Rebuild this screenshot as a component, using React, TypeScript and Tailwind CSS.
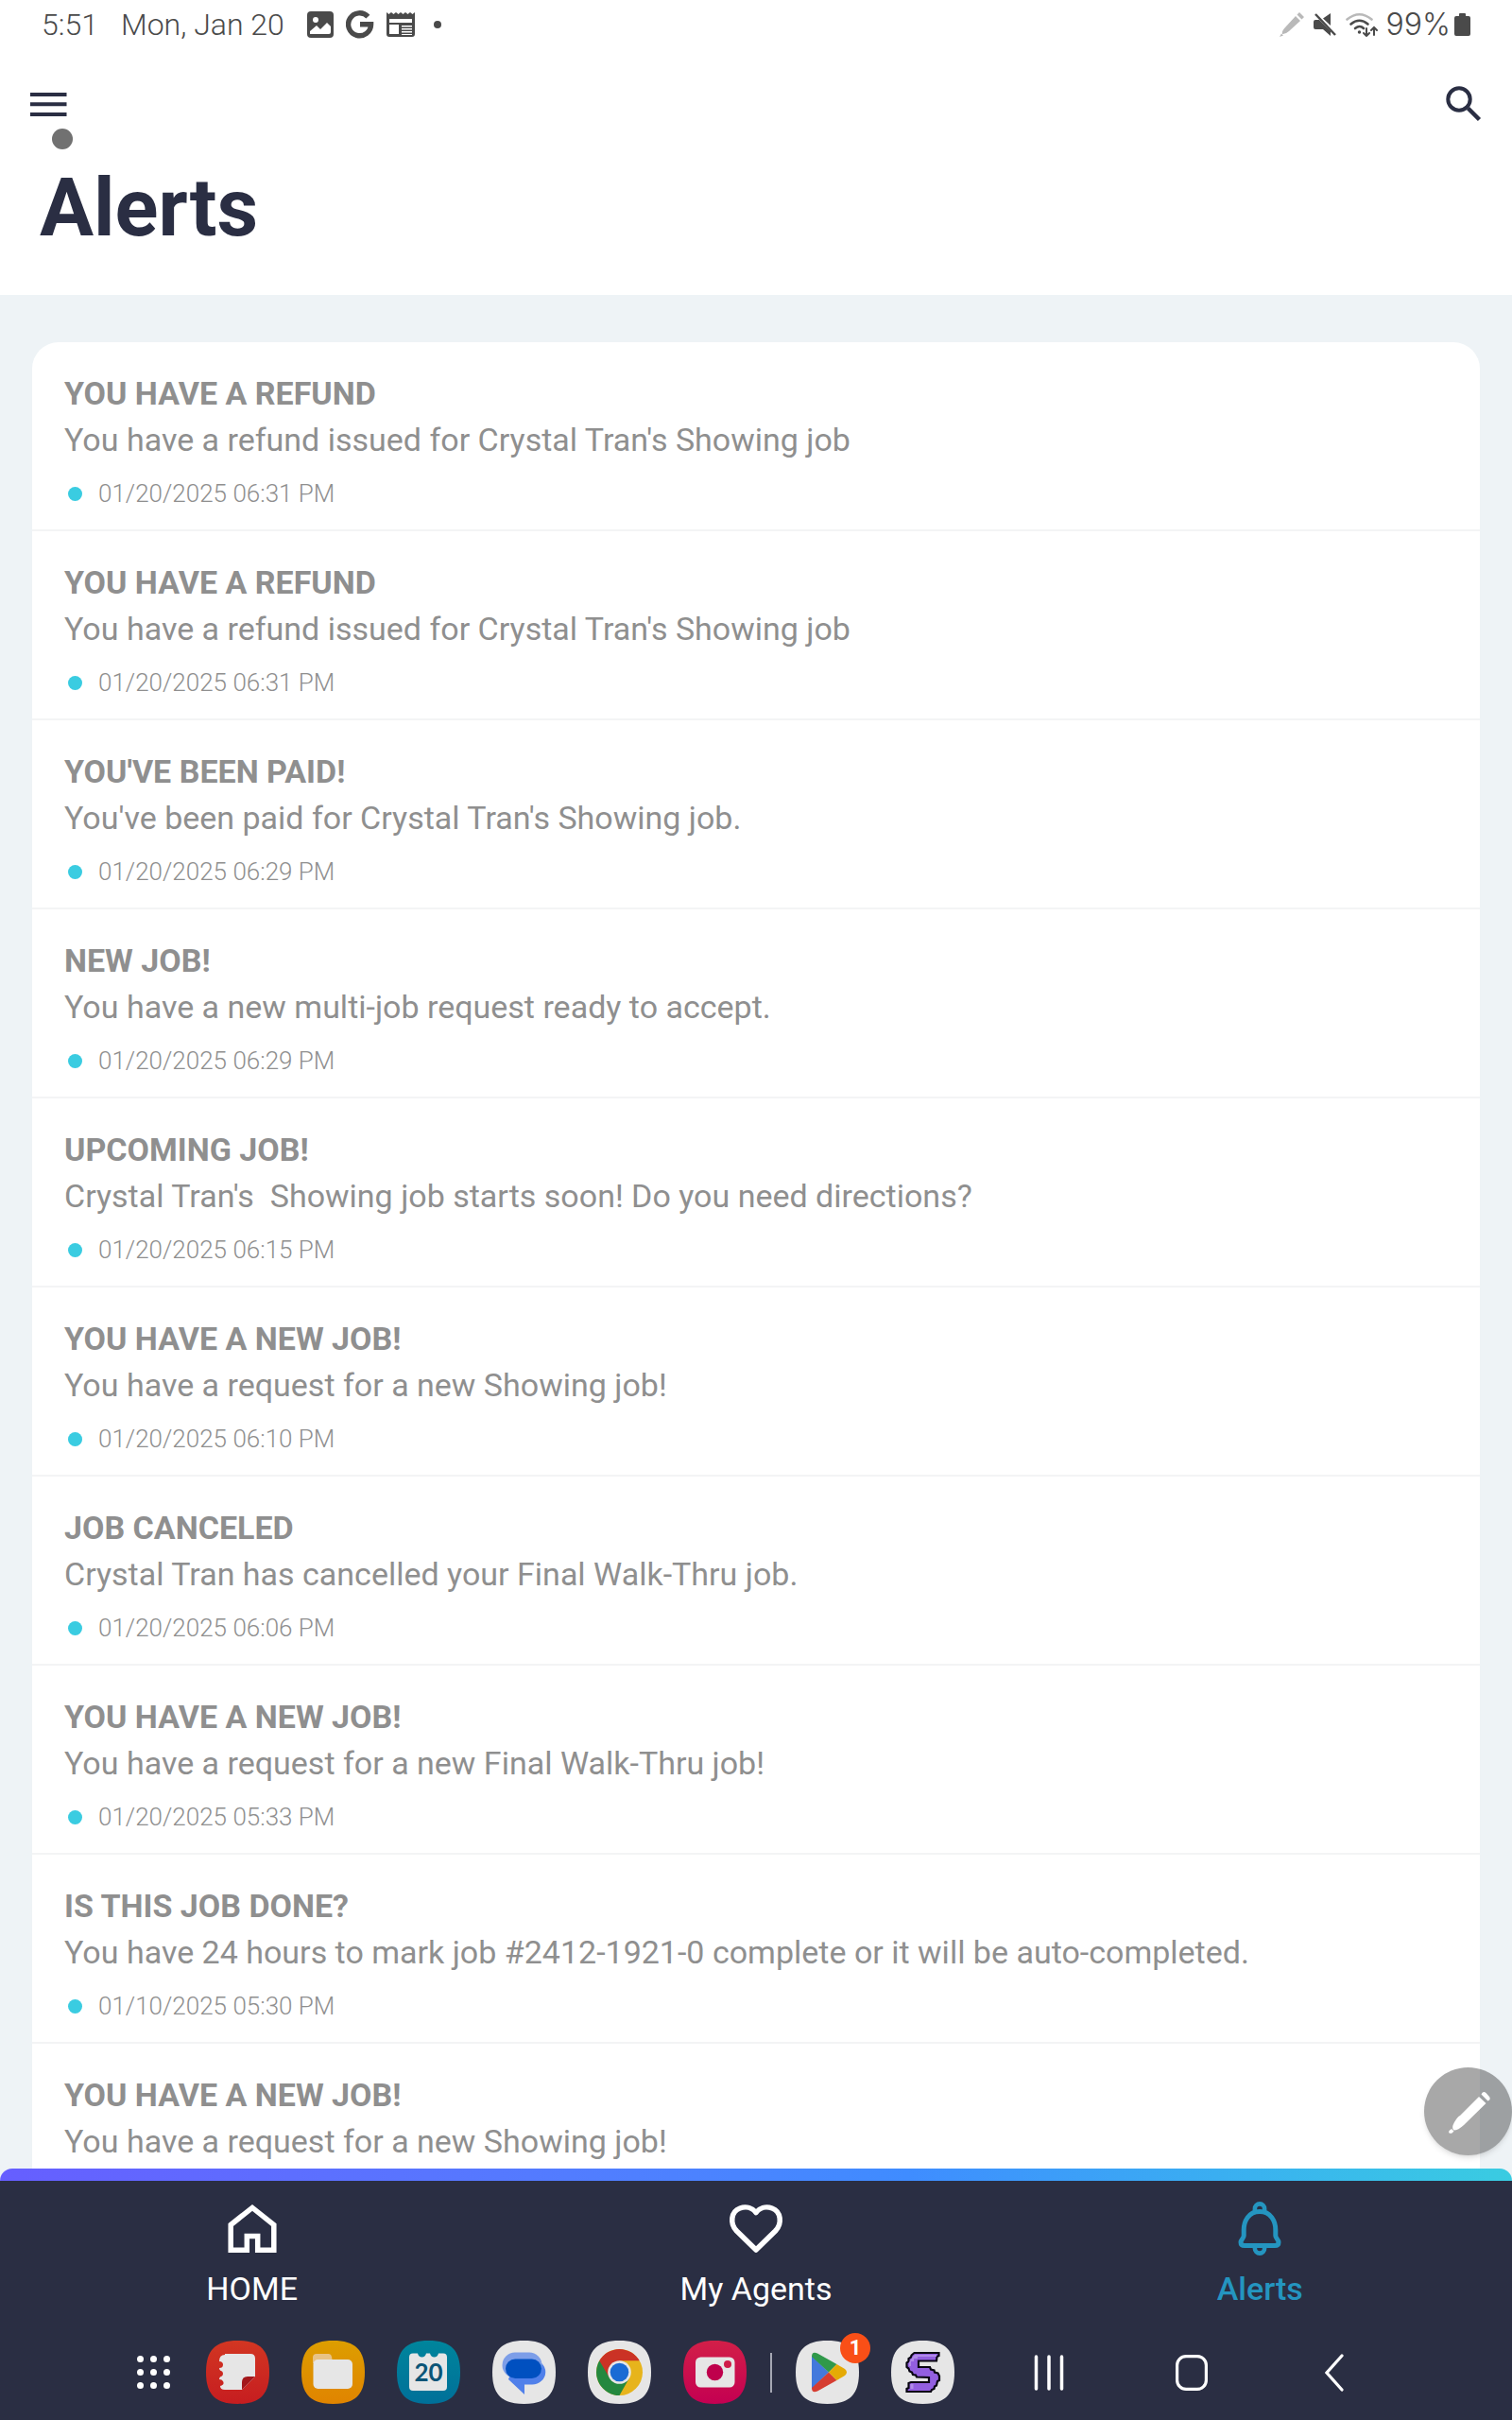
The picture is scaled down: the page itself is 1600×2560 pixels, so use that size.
import React from 'react';

interface AlertItem {
  id: number;
  title: string;
  message: string;
  date?: string;
}

const ALERTS: AlertItem[] = [
  { id: 1, title: 'YOU HAVE A REFUND', message: "You have a refund issued for Crystal Tran's Showing job", date: '01/20/2025 06:31 PM' },
  { id: 2, title: 'YOU HAVE A REFUND', message: "You have a refund issued for Crystal Tran's Showing job", date: '01/20/2025 06:31 PM' },
  { id: 3, title: "YOU'VE BEEN PAID!", message: "You've been paid for Crystal Tran's Showing job.", date: '01/20/2025 06:29 PM' },
  { id: 4, title: 'NEW JOB!', message: 'You have a new multi-job request ready to accept.', date: '01/20/2025 06:29 PM' },
  { id: 5, title: 'UPCOMING JOB!', message: "Crystal Tran's  Showing job starts soon! Do you need directions?", date: '01/20/2025 06:15 PM' },
  { id: 6, title: 'YOU HAVE A NEW JOB!', message: 'You have a request for a new Showing job!', date: '01/20/2025 06:10 PM' },
  { id: 7, title: 'JOB CANCELED', message: 'Crystal Tran has cancelled your Final Walk-Thru job.', date: '01/20/2025 06:06 PM' },
  { id: 8, title: 'YOU HAVE A NEW JOB!', message: 'You have a request for a new Final Walk-Thru job!', date: '01/20/2025 05:33 PM' },
  { id: 9, title: 'IS THIS JOB DONE?', message: 'You have 24 hours to mark job #2412-1921-0 complete or it will be auto-completed.', date: '01/10/2025 05:30 PM' },
  { id: 10, title: 'YOU HAVE A NEW JOB!', message: 'You have a request for a new Showing job!' },
];

/* ---------- status bar ---------- */

const StatusBar = () => (
  <div className="flex h-[52px] shrink-0 items-center justify-between pl-11 pr-11 text-[32px] leading-none text-[#4a4a4a]">
    <div className="flex items-center font-[350]">
      <span>5:51</span>
      <span className="ml-6">Mon, Jan 20</span>
      <svg className="ml-6 size-7" viewBox="0 0 28 28" aria-hidden="true">
        <rect width="28" height="28" rx="4" fill="currentColor" />
        <circle cx="9" cy="9" r="3" fill="#fff" />
        <path d="M3 24v-3l7-6 4 4 7-7 4 4v6q0 2-2 2z" fill="#fff" />
      </svg>
      <svg className="ml-[13px] size-[30px]" viewBox="0 0 30 30" fill="none" stroke="currentColor" strokeWidth="5.4" aria-hidden="true">
        <path d="M23.4 6.6A12 12 0 1 0 26.600 14.800H15" />
      </svg>
      <svg className="ml-[13px] size-[30px]" viewBox="0 0 30 30" aria-hidden="true">
        <path d="M0 2l2.500 2L5 2l2.500 2L10 2l2.500 2L15 2l2.500 2L20 2l2.500 2L25 2l2.500 2L30 2v23q0 3-3 3H3q-3 0-3-3z" fill="currentColor" />
        <path d="M3 9h24v4H3zM3 15h10v10H3zM16 16h11v1.500H16zM16 19h11v1.500H16zM16 22h11v1.500H16zM16 25h11v1H16z" fill="#fff" />
      </svg>
      <span className="ml-5 size-2 rounded-full bg-[#4a4a4a]" />
    </div>
    <div className="flex items-center">
      <svg className="size-[26px] text-[#b9b9b9]" viewBox="0 0 26 26" fill="currentColor" aria-hidden="true">
        <path d="M17 4l5 5L10 20q-4 3.500-7 3-1-3 3-7z" />
        <path d="M18.500 2.500L21 0l5 5-2.500 2.500zM2 22.500l2 2L0 26z" />
      </svg>
      <svg className="ml-[10px] h-[26px] w-6" viewBox="0 0 24 26" fill="currentColor" aria-hidden="true">
        <path d="M18 1v13L10 6.500zM0 10q0-2 2-2h4l12 12v5l-8-7H2q-2 0-2-2z" />
        <path d="M2 2l21 22" stroke="currentColor" strokeWidth="2.500" />
      </svg>
      <svg className="ml-[10px] h-[26px] w-[34px]" viewBox="0 0 34 26" fill="none" stroke="currentColor" strokeWidth="2.600" strokeLinecap="round" aria-hidden="true">
        <path d="M1.500 7.500q13-10.500 26 0" stroke="#b9b9b9" />
        <path d="M5.500 12.500q9-7.500 18 0M10 17q5-4 9 0" />
        <circle cx="14.500" cy="21" r="1" fill="currentColor" strokeWidth="1.500" />
        <path d="M22 17v8m-3-3l3 3 3-3M30 24v-8m-3 3l3-3 3 3" strokeWidth="2" />
      </svg>
      <span className="ml-[9px] font-[Inter,sans-serif] font-[350]">99%</span>
      <svg className="ml-1 h-6 w-[17px]" viewBox="0 0 17 24" fill="currentColor" aria-hidden="true">
        <path d="M5 1q0-1 1-1h5q1 0 1 1v2h3q2 0 2 2v17q0 2-2 2H2q-2 0-2-2V5q0-2 2-2h3z" />
      </svg>
    </div>
  </div>
);

/* ---------- page header ---------- */

const Header = () => (
  <header className="flex h-[260px] shrink-0 flex-col">
    <div className="flex items-center justify-between pl-8 pr-8 pt-9">
      <button type="button" aria-label="Open menu" className="relative text-[#2a2e43]">
        <svg className="h-[46px] w-[39px]" viewBox="0 0 39 46" fill="currentColor">
          <path d="M0 10h38.500v4H0zM0 20.300h38.500v4H0zM0 31h38.500v4H0z" />
        </svg>
        <span className="absolute left-[23px] top-12 size-[22px] rounded-full bg-[#717171]" />
      </button>
      <button type="button" aria-label="Search" className="text-[#2a2e43]">
        <svg className="h-[46px] w-[38px]" viewBox="0 0 38 46" fill="none" stroke="currentColor" strokeWidth="4">
          <circle cx="14" cy="17" r="11.700" />
          <path d="M23.500 26.500l12 12" strokeWidth="4.500" />
        </svg>
      </button>
    </div>
    <h1 className="mt-9 pl-[42px] text-[85px] font-bold leading-[100px] text-[#2a2e43]">Alerts</h1>
  </header>
);

const AlertRow = ({ alert }: { alert: AlertItem }) => (
  <li className="border-b-2 border-[#f3f4f5] px-[34px] pb-[18px] pt-8 text-[#8f8f8f]">
    <h2 className="text-[34px] font-bold leading-[44px]">{alert.title}</h2>
    <p className="mt-1 whitespace-pre text-[34px] leading-[46px]">{alert.message}</p>
    <div className="mt-[14px] flex h-10 items-center gap-[17px] pl-1">
      <span className="size-[15px] rounded-full bg-[#3acce1]" />
      {alert.date && <time className="text-[26px] font-[350] leading-10">{alert.date}</time>}
    </div>
  </li>
);

/* ---------- bottom tabs ---------- */

const HomeIcon = () => (
  <svg className="size-[60px]" viewBox="0 0 60 60" fill="none" stroke="currentColor" strokeWidth="5.500" aria-hidden="true">
    <path d="M7.200 25.500L30 7.400l22.800 18.100v26.700H35.700V37.500H24.300v14.700H7.200z" />
  </svg>
);

const HeartIcon = () => (
  <svg className="size-[60px]" viewBox="0 0 60 60" fill="none" stroke="currentColor" strokeWidth="5.500" strokeLinejoin="round" aria-hidden="true">
    <path d="M30 52L9.500 32C2 24 3.500 11.500 13 8C20 5.500 26.500 8 30 12.500C33.500 8 40 5.500 47 8C56.500 11.500 58 24 50.500 32z" />
  </svg>
);

const BellIcon = () => (
  <svg className="size-[66px]" viewBox="0 0 66 66" fill="none" stroke="currentColor" strokeWidth="5" strokeLinejoin="round" aria-hidden="true">
    <path d="M33 14.500C21 14.500 16.200 25 16.200 34v6c0 3-3.200 4-3.200 7q0 3.500 4 3.500h32q4 0 4-3.500c0-3-3.200-4-3.200-7v-6C49.800 25 45 14.500 33 14.500z" />
    <path d="M27.900 15v-3.500a5.100 5.100 0 0 1 10.200 0V15M27.900 51v2.500a5.100 5.100 0 0 0 10.200 0V51" strokeWidth="4.600" />
  </svg>
);

const TABS = [
  { label: 'HOME', icon: <HomeIcon />, active: false },
  { label: 'My Agents', icon: <HeartIcon />, active: false },
  { label: 'Alerts', icon: <BellIcon />, active: true },
];

const TabBar = () => (
  <nav className="shrink-0 bg-[#2a2e43]" aria-label="Main">
    <div className="bg-[#eef3f6]">
      <div className="h-[13px] rounded-t-[13px] bg-linear-to-r from-[#665eff] via-[#3f8cff] via-60% to-[#3acce1]" />
    </div>
    <div className="grid h-[152px] grid-cols-3">
      {TABS.map((tab) => (
        <a
          key={tab.label}
          href="#"
          aria-current={tab.active ? 'page' : undefined}
          className={`flex flex-col items-center pt-[18px] text-[34px] leading-10 ${tab.active ? 'font-medium text-[#2495c0]' : 'text-white'}`}
        >
          <span className="flex h-[66px] items-center">{tab.icon}</span>
          <span className="mt-[10px]">{tab.label}</span>
        </a>
      ))}
    </div>
  </nav>
);

/* ---------- device task bar ---------- */

const SQUIRCLE = 'M33.500 0C57 0 67 10 67 33.500S57 67 33.500 67S0 57 0 33.500S10 0 33.500 0z';

const AppButton = ({ label, fill, children }: { label: string; fill: string; children: React.ReactNode }) => (
  <button type="button" aria-label={label} className="relative shrink-0">
    <svg className="size-[67px]" viewBox="0 0 67 67">
      <defs>
        <linearGradient id="redApp" x1="0" y1="0" x2="0" y2="1"><stop stopColor="#d23622" /><stop offset="1" stopColor="#c61d20" /></linearGradient>
        <linearGradient id="yellowApp" x1="0" y1="0" x2="0" y2="1"><stop stopColor="#dd9e00" /><stop offset="1" stopColor="#e08400" /></linearGradient>
        <linearGradient id="tealApp" x1="0" y1="0" x2="0" y2="1"><stop stopColor="#00859c" /><stop offset="1" stopColor="#007099" /></linearGradient>
        <linearGradient id="pinkApp" x1="0" y1="0" x2="0" y2="1"><stop stopColor="#d21f48" /><stop offset="1" stopColor="#c40052" /></linearGradient>
      </defs>
      <path d={SQUIRCLE} fill={fill} />
      {children}
    </svg>
  </button>
);

const TaskBar = () => (
  <footer className="flex h-[101px] shrink-0 items-center bg-[#2a2e43] pl-[145px] text-white">
    <button type="button" aria-label="All apps" className="shrink-0">
      <svg className="size-[35px]" viewBox="0 0 35 35" fill="currentColor">
        {[3.5, 17.5, 31.5].map((y) => [3.5, 17.5, 31.5].map((x) => <circle key={`${x}-${y}`} cx={x} cy={y} r="3.500" />))}
      </svg>
    </button>
    <div className="ml-[38px] flex items-center gap-[34px]">
      <AppButton label="Notes" fill="url(#redApp)">
        <path d="M20 14h27q5 0 5 5v19L38 52H20q-5 0-5-4q5-1 3-5q-1-2-4-2q0-3 3-3.500q2-2.500 0-5q-3-1-3-3.500q4 0 4-3.500t-4-3.500q0-7 6-7z" fill="#e6e6e6" />
        <path d="M38 52V44q0-6 6-6h8z" fill="#a3171b" />
      </AppButton>
      <AppButton label="My Files" fill="url(#yellowApp)">
        <path d="M12 24v-6q0-4 4-4h13q3 0 3.500 6z" fill="#e8c285" />
        <rect x="12.500" y="20" width="41.500" height="31" rx="5" fill="#e6e6e6" />
      </AppButton>
      <AppButton label="Calendar" fill="url(#tealApp)">
        <path d="M17 13.500h5q1 4 4.500 4t4.500-4h4q1 4 4.500 4t4.500-4h5q4 0 4 4V49q0 4-4 4H17q-4 0-4-4V17.500q0-4 4-4z" fill="#e6e6e6" />
        <text x="33.500" y="43" textAnchor="middle" fontSize="26" fontWeight="700" fill="#0b5577" fontFamily="Lato, sans-serif">20</text>
      </AppButton>
      <AppButton label="Messages" fill="#e6e6e6">
        <path d="M25 20h17a14 13 0 0 1 0 26.500h-8V57L17 41z" fill="#5080ea" />
        <rect x="10.500" y="12.500" width="42" height="27" rx="13.500" fill="#7d9ee8" />
        <rect x="14" y="19.500" width="38" height="20.500" rx="10.200" fill="#0050c0" />
      </AppButton>
      <AppButton label="Chrome" fill="#e6e6e6">
        <circle cx="33.500" cy="33.500" r="24.500" fill="#e7b41c" />
        <path d="M33.500 33.500L12.300 21.300A24.500 24.500 0 0 0 33.500 58L44 39.500z" fill="#24883f" />
        <path d="M12.300 21.300A24.500 24.500 0 0 1 54.700 21.300H33.500L23 39.500z" fill="#cb3225" />
        <circle cx="33.500" cy="33.500" r="12.300" fill="#e6e6e6" />
        <circle cx="33.500" cy="33.500" r="9.800" fill="#1a6bd4" />
      </AppButton>
      <AppButton label="Camera" fill="url(#pinkApp)">
        <rect x="13" y="17.500" width="41.500" height="32" rx="5.500" fill="#e6e6e6" />
        <circle cx="33.500" cy="33.500" r="8.700" fill="#bf004c" />
        <circle cx="47" cy="25" r="4" fill="#cf1c48" />
      </AppButton>
    </div>
    <span className="mx-[25px] h-[42px] w-[2px] bg-[#a5a7b3]" />
    <div className="flex items-center gap-[34px]">
      <div className="relative flex">
        <AppButton label="Play Store" fill="#e6e6e6">
          <path d="M17 16v35l18-17.500z" fill="#4379dc" />
          <path d="M17 17q0-6 6-3.500L43.500 25L35 33.500z" fill="#30994a" />
          <path d="M17 50q0 6 6 3.500L43.500 42L35 33.500z" fill="#d63d31" />
          <path d="M43.500 25l8.500 5q4 3.500 0 7l-8.500 5L35 33.500z" fill="#e5aa05" />
        </AppButton>
        <span className="absolute -right-3 -top-2 flex size-8 items-center justify-center rounded-full bg-[#f94f17] text-[22px] font-bold leading-none">1</span>
      </div>
      <AppButton label="Shortcuts" fill="#e6e6e6">
        <path
          d="M24.500 13H50.500V16L48.500 17L48 21.500H29V28H41L42 30.500L45.500 31.500L46 33.500L49.500 34.500L51 37.500V42L49 43L48 47.500L46 48.500L45.500 51L43 52L42 54H16.500V51L18.500 50V45L21 44H40V39L27 38.500L26 36.500L23 36L22 33.500L19.500 32.500L18.500 29.500L16.500 28V23.500L18.500 22V19L21 17.500L21.500 15.500z"
          fill="#935fe0"
          stroke="#090612"
          strokeWidth="2.200"
        />
        <path d="M25 15h23v2H28v2h-4v3h-3v5h-2v-4l2-3 2-3zM20.500 46h3v5h-3z" fill="#b18be8" />
      </AppButton>
    </div>
    <div className="ml-6 flex flex-1 items-center">
      <button type="button" aria-label="Recent apps" className="flex w-[151px] justify-center">
        <svg className="h-[38px] w-8" viewBox="0 0 32 38" stroke="currentColor" strokeWidth="3.500" strokeLinecap="round">
          <path d="M2.500 2v34M16 2v34M29.500 2v34" />
        </svg>
      </button>
      <button type="button" aria-label="Home" className="flex w-[151px] justify-center">
        <svg className="h-[38px] w-[34px]" viewBox="0 0 34 38" fill="none" stroke="currentColor" strokeWidth="3.200">
          <rect x="1.600" y="1.600" width="30.800" height="34.800" rx="9.500" />
        </svg>
      </button>
      <button type="button" aria-label="Back" className="flex w-[151px] justify-center">
        <svg className="h-10 w-5" viewBox="0 0 20 40" fill="none" stroke="currentColor" strokeWidth="3.200" strokeLinecap="round">
          <path d="M18 2L2 20l16 18" />
        </svg>
      </button>
    </div>
  </footer>
);

const App = () => (
  <div className="flex h-screen flex-col overflow-hidden bg-white font-[Roboto,sans-serif]">
    <StatusBar />
    <Header />
    <main className="relative min-h-0 flex-1 bg-[#eef3f6]">
      <div className="h-full overflow-hidden px-[34px] pt-[50px]">
        <ul className="rounded-t-[28px] bg-white">
          {ALERTS.map((alert) => (
            <AlertRow key={alert.id} alert={alert} />
          ))}
        </ul>
      </div>
      {/* floating pen shortcut */}
      <button
        type="button"
        aria-label="Pen tools"
        className="absolute bottom-[14px] right-0 flex size-[93px] items-center justify-center rounded-full bg-black/34 text-white shadow-md"
      >
        <svg className="size-[46px]" viewBox="0 0 46 46" fill="currentColor">
          <path d="M34 7l7.500 7L18 37q-6 5.500-10.500 5.500Q4.500 40 8 34t6-7z" />
          <path d="M36.500 4.500q2-4 5-1.500l3.500 4q2 3-1.500 4.500zM2.500 43l2.500-2 2.500 2.500-2 2q-4.500 1-3-2.500z" />
        </svg>
      </button>
    </main>
    <TabBar />
    <TaskBar />
  </div>
);

export default App;
